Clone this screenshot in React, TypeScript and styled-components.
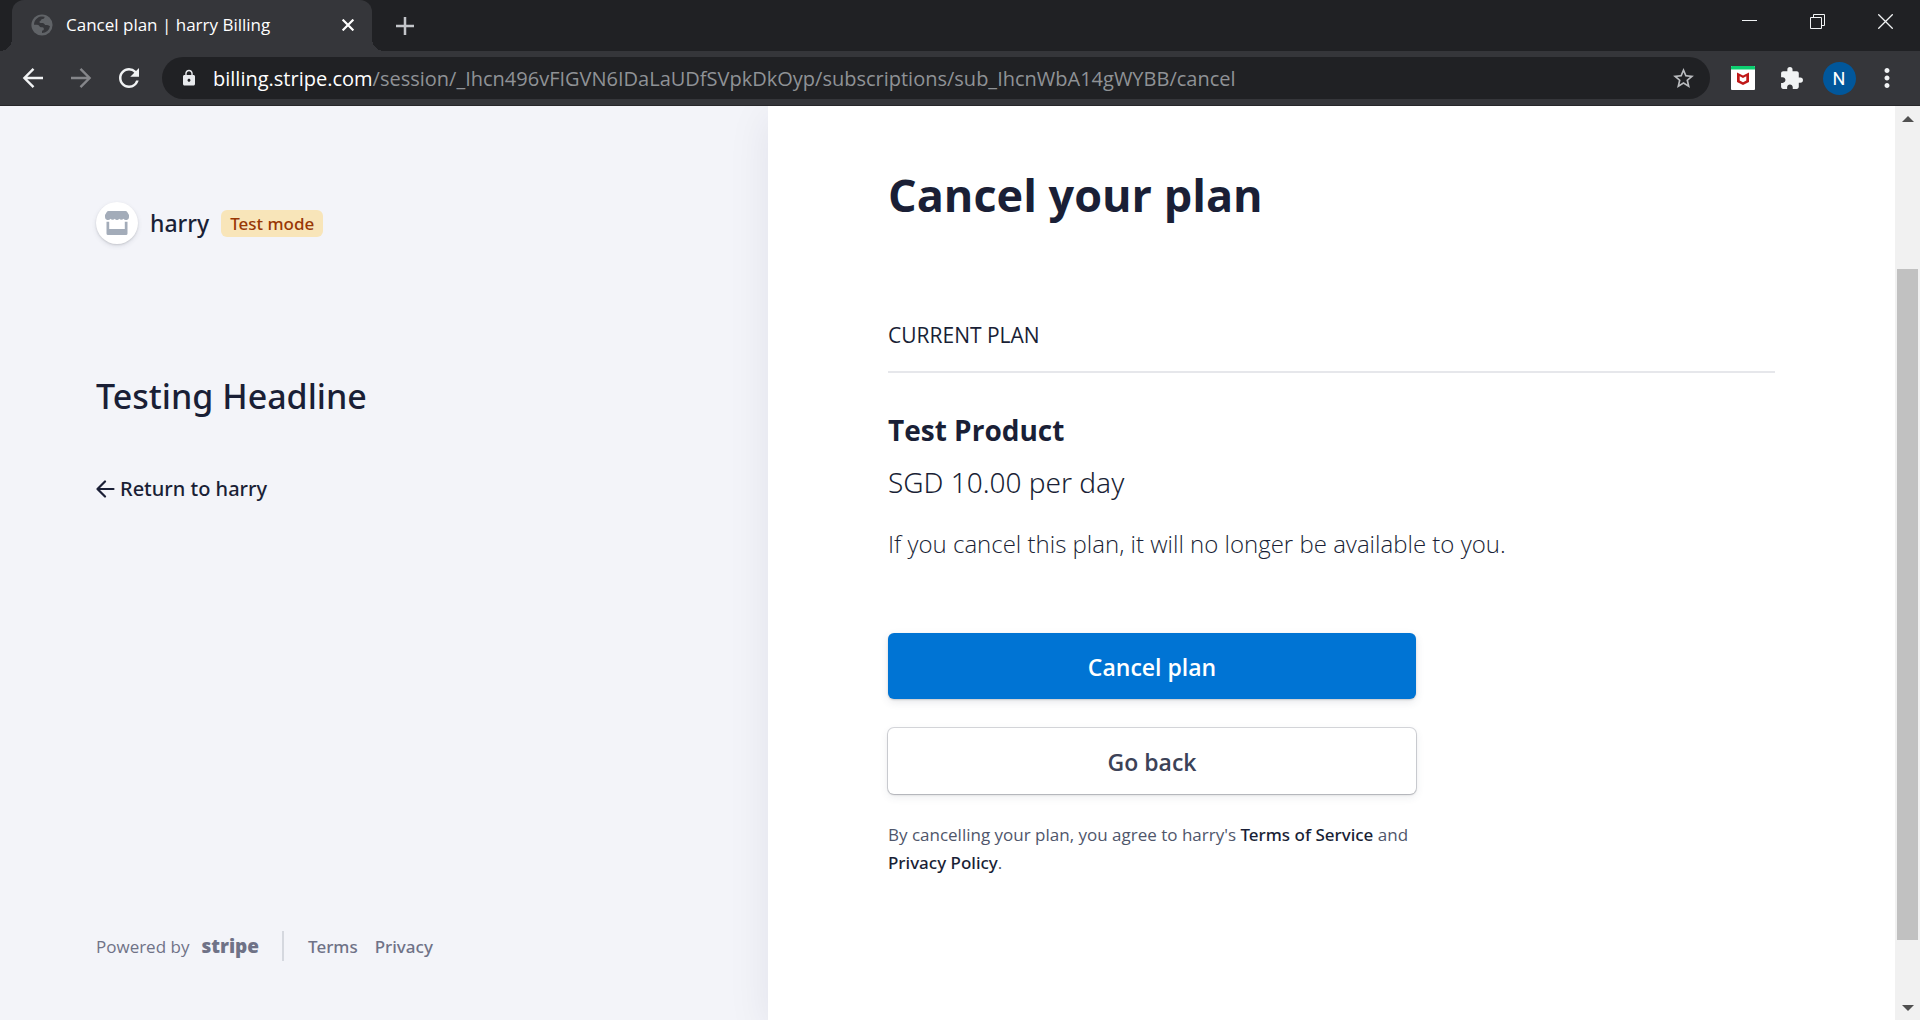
import React from 'react';
import styled, { createGlobalStyle } from 'styled-components';
import { MdRefresh, MdLock, MdStarBorder, MdExtension, MdMoreVert } from 'react-icons/md';

const medium = '"Noto Sans", "Open Sans", sans-serif';

const GlobalStyle = createGlobalStyle`
  *, *::before, *::after { box-sizing: border-box; }
  body {
    margin: 0;
    font-family: "Open Sans", "Noto Sans", sans-serif;
    color: #1a1f36;
  }
  h1, h2, p { margin: 0; }
  button { font: inherit; cursor: pointer; }
  a { color: inherit; text-decoration: none; }
`;

const Window = styled.div`
  display: flex;
  flex-direction: column;
  height: 100vh;
  overflow: hidden;
`;

/* Browser frame */

const TabStrip = styled.header`
  display: flex;
  align-items: stretch;
  flex: none;
  height: 51px;
  padding-left: 12px;
  background: #202124;
`;

const Tab = styled.div`
  position: relative;
  display: flex;
  align-items: center;
  width: 360px;
  padding: 0 12px 2px 19px;
  border-radius: 12px 12px 0 0;
  background: #35363a;
  color: #fff;
  font-size: 17px;

  &::before,
  &::after {
    content: '';
    position: absolute;
    bottom: 0;
    width: 12px;
    height: 12px;
  }
  &::before {
    right: 100%;
    background: radial-gradient(circle at 0 0, transparent 12px, #35363a 12px);
  }
  &::after {
    left: 100%;
    background: radial-gradient(circle at 100% 0, transparent 12px, #35363a 12px);
  }
`;

const TabTitle = styled.span`
  flex: 1;
  margin-left: 13px;
  white-space: nowrap;
`;

const IconButton = styled.button<{ $width?: number; $color?: string }>`
  display: flex;
  align-items: center;
  justify-content: center;
  flex: none;
  width: ${(p) => p.$width ?? 48}px;
  height: 100%;
  padding: 0;
  border: 0;
  background: transparent;
  color: ${(p) => p.$color ?? '#f1f3f4'};
`;

const NewTab = styled(IconButton)`
  margin-left: 9px;
`;

const WindowControls = styled.div`
  display: flex;
  height: 43px;
  margin-left: auto;
`;

const Toolbar = styled.div`
  display: flex;
  align-items: center;
  flex: none;
  height: 55px;
  padding: 0 9px;
  border-bottom: 1px solid #27272a;
  background: #35363a;
`;

const AddressBar = styled.div`
  display: flex;
  align-items: center;
  flex: 1;
  min-width: 0;
  height: 42px;
  margin: 0 9px;
  padding: 0 3px 0 18px;
  border-radius: 21px;
  background: #202124;
  color: #e8eaed;
`;

const Url = styled.div`
  flex: 1;
  min-width: 0;
  margin-left: 15px;
  overflow: hidden;
  white-space: nowrap;
  font-size: 20px;
  color: #8f9296;
`;

const Host = styled.span`
  color: #fff;
`;

const Avatar = styled.span`
  display: flex;
  align-items: center;
  justify-content: center;
  width: 33px;
  height: 33px;
  border-radius: 50%;
  background: #01579b;
  color: #fff;
  font-family: Roboto, sans-serif;
  font-size: 18px;
`;

/* Page */

const Viewport = styled.div`
  display: flex;
  flex: 1;
  min-height: 0;
`;

const Sidebar = styled.aside`
  display: flex;
  flex-direction: column;
  flex: none;
  width: 40%;
  padding: 96px 96px 59px;
  background: #f3f4f9;
`;

const Brand = styled.div`
  display: flex;
  align-items: center;
  gap: 12px;
  font-family: ${medium};
  font-size: 23px;
  font-weight: 500;
`;

const BrandMark = styled.span`
  display: flex;
  align-items: center;
  justify-content: center;
  width: 42px;
  height: 42px;
  border-radius: 50%;
  background: #fff;
  box-shadow: 0 2px 5px rgba(60, 66, 87, 0.12), 0 1px 2px rgba(0, 0, 0, 0.12);
`;

const Badge = styled.span`
  padding: 0 9px;
  border-radius: 6px;
  background: #f8e5b9;
  color: #983705;
  font-size: 17px;
  line-height: 27px;
`;

const Headline = styled.h2`
  margin-top: 130px;
  font-family: ${medium};
  font-size: 34px;
  font-weight: 500;
  line-height: 44px;
`;

const ReturnLink = styled.a`
  display: flex;
  align-items: center;
  align-self: flex-start;
  gap: 5px;
  margin-top: 57px;
  font-family: ${medium};
  font-size: 20px;
  font-weight: 500;
  line-height: 28px;
`;

const Footer = styled.footer`
  display: flex;
  align-items: center;
  height: 30px;
  margin-top: auto;
  font-size: 17px;
  color: #6f7287;
`;

const Powered = styled.a`
  display: flex;
  align-items: center;
  gap: 12px;
  height: 100%;
  padding-right: 23px;
  border-right: 2px solid #d5d8df;
`;

const StripeMark = styled.span`
  font-size: 19px;
  font-weight: 800;
`;

const FooterLinks = styled.nav`
  display: flex;
  gap: 17px;
  padding-left: 24px;
  font-family: ${medium};
  font-weight: 500;
`;

const Main = styled.main`
  position: relative;
  flex: 1;
  min-width: 0;
  padding: 61px 120px 0;
  background: #fff;
  box-shadow: 0 10px 40px rgba(30, 30, 60, 0.08);
  clip-path: inset(0 0 0 -60px);
`;

const Title = styled.h1`
  font-size: 45px;
  line-height: 56px;
`;

const SectionLabel = styled.h2`
  margin-top: 98px;
  padding-bottom: 22px;
  border-bottom: 2px solid #e6e7eb;
  font-size: 21px;
  font-weight: 400;
  line-height: 28px;
`;

const Product = styled.p`
  margin-top: 39px;
  font-size: 28px;
  font-weight: 700;
  line-height: 36px;
`;

const Price = styled.p`
  margin-top: 16px;
  font-family: ${medium};
  font-size: 28px;
  font-weight: 300;
  line-height: 36px;
`;

const Notice = styled.p`
  margin-top: 26px;
  font-size: 24px;
  font-weight: 300;
  line-height: 36px;
`;

const Actions = styled.div`
  display: flex;
  flex-direction: column;
  gap: 29px;
  max-width: 528px;
  margin-top: 71px;
`;

const ActionButton = styled.button<{ $primary?: boolean }>`
  height: 66px;
  padding-top: 3px;
  border: 0;
  border-radius: 6px;
  background: ${(p) => (p.$primary ? '#0074d4' : '#fff')};
  color: ${(p) => (p.$primary ? '#fff' : '#3c4257')};
  box-shadow: ${(p) =>
    p.$primary
      ? '0 1px 2px rgba(0, 0, 0, 0.16), 0 3px 8px rgba(60, 66, 87, 0.12)'
      : '0 0 0 1px rgba(60, 66, 87, 0.2), 0 1px 2px rgba(0, 0, 0, 0.16), 0 3px 8px rgba(60, 66, 87, 0.1)'};
  font-size: 23px;
  font-weight: 600;
`;

const Legal = styled.p`
  max-width: 532px;
  margin-top: 27px;
  font-size: 17px;
  line-height: 28px;
  color: #4f566b;

  a {
    color: #1a1f36;
    font-family: ${medium};
    font-weight: 500;
  }
`;

const ScrollBar = styled.div`
  display: flex;
  flex-direction: column;
  flex: none;
  width: 25px;
  background: #f1f1f1;
`;

const ScrollArrow = styled.span<{ $down?: boolean }>`
  display: flex;
  align-items: center;
  justify-content: center;
  height: 25px;

  &::before {
    content: '';
    border: 6px solid transparent;
    border-top: ${(p) => (p.$down ? '6px solid #505050' : '0')};
    border-bottom: ${(p) => (p.$down ? '0' : '6px solid #505050')};
  }
`;

const ScrollSpace = styled.span<{ $grow: number }>`
  flex: ${(p) => p.$grow};
`;

const ScrollThumb = styled.span`
  flex: 671;
  margin: 0 2px;
  background: #c1c1c1;
`;

const Arrow = ({ flip = false }: { flip?: boolean }) => (
  <svg width="22" height="22" viewBox="0 0 22 22" fill="none" stroke="currentColor" strokeWidth="2.4">
    <path d={flip ? 'M1 11h18M10.5 1.8 19.6 11l-9.1 9.2' : 'M21 11H3M11.5 1.8 2.4 11l9.1 9.2'} />
  </svg>
);

const Globe = () => (
  <svg width="22" height="22" viewBox="0 0 22 22">
    <circle cx="11" cy="11" r="10.6" fill="#606367" />
    <path
      fill="#35363a"
      d="M13.500 2.800c.2 1.600-.9 2-2.200 2.200-1.400.2-1 1.500-2.100 2-1.200.5-1.100 1.900.2 2 1.500.1 3.600-.2 4.200 1.200.5 1.300 2.300.6 3.400 1 1.200.5 1.600.9 2 .7a8 8 0 0 1-8 7.100v-2.300c1.300-.2 2-.9 1.800-2.200-.2-1.200-1.500-1.300-2.700-1.200-1.700.1-1.500-1.800-3-2.300-1.300-.4-2.800-.4-4.100-.2A8.200 8.200 0 0 1 13.500 2.800z"
    />
  </svg>
);

const StoreIcon = () => (
  <svg width="24" height="24" viewBox="0 0 24 24" fill="#a3acb9">
    <path d="M3.500 0h17a2 2 0 0 1 1.700 1L24 4v2a3 3 0 0 1-5.500 1.700 2.600 2.600 0 0 1-4.300 0 2.600 2.600 0 0 1-4.400 0 2.600 2.600 0 0 1-4.300 0A3 3 0 0 1 0 6V4l1.800-3a2 2 0 0 1 1.700-1z" />
    <path d="M1.500 10.800h2.700V18h15.600v-7.200h2.700V22.500A1.500 1.500 0 0 1 21 24H3a1.500 1.500 0 0 1-1.500-1.500z" />
  </svg>
);

const ShieldBadge = () => (
  <svg width="24" height="24" viewBox="0 0 24 24">
    <rect width="24" height="24" rx="1" fill="#fff" />
    <path d="M0 3.500V1a1 1 0 0 1 1-1h22a1 1 0 0 1 1 1v2.500z" fill="#0ccf70" />
    <path d="M6 6.500 12 9.500 18 6.500V16L12 19 6 16zM8.700 10.300v4.200l3.300 1.700 3.300-1.700v-4.200L12 12z" fill="#c01818" fillRule="evenodd" />
  </svg>
);

export default function App() {
  return (
    <Window>
      <GlobalStyle />
      <TabStrip>
        <Tab>
          <Globe />
          <TabTitle>Cancel plan | harry Billing</TabTitle>
          <IconButton $width={24} $color="#fff" aria-label="Close tab">
            <svg width="12" height="12" viewBox="0 0 12 12" stroke="currentColor" strokeWidth="2.2">
              <path d="M.6.6l10.800 10.800M11.400.6.6 11.400" />
            </svg>
          </IconButton>
        </Tab>
        <NewTab $color="#c3c5c9" aria-label="New tab">
          <svg width="18" height="18" viewBox="0 0 18 18" stroke="currentColor" strokeWidth="2.500">
            <path d="M9 0v18M0 9h18" />
          </svg>
        </NewTab>
        <WindowControls>
          <IconButton $width={68} aria-label="Minimise">
            <svg width="15" height="15" viewBox="0 0 15 15" fill="none" stroke="currentColor">
              <path d="M0 6.500h15" />
            </svg>
          </IconButton>
          <IconButton $width={68} aria-label="Restore">
            <svg width="15" height="15" viewBox="0 0 15 15" fill="none" stroke="currentColor">
              <path d="M.5 3.500h11v11H.5zM3.500 3.500v-3h11v11h-3" />
            </svg>
          </IconButton>
          <IconButton $width={69} aria-label="Close">
            <svg width="15" height="15" viewBox="0 0 15 15" fill="none" stroke="currentColor" strokeWidth="1.300">
              <path d="M.3.3l14.400 14.400M14.700.3.3 14.700" />
            </svg>
          </IconButton>
        </WindowControls>
      </TabStrip>

      <Toolbar>
        <IconButton aria-label="Back"><Arrow /></IconButton>
        <IconButton $color="#85868a" aria-label="Forward"><Arrow flip /></IconButton>
        <IconButton aria-label="Reload"><MdRefresh size={30} /></IconButton>
        <AddressBar>
          <MdLock size={18} />
          <Url>
            <Host>billing.stripe.com</Host>
            /session/_Ihcn496vFIGVN6IDaLaUDfSVpkDkOyp/subscriptions/sub_IhcnWbA14gWYBB/cancel
          </Url>
          <IconButton $color="#b9bbbe" aria-label="Bookmark this page"><MdStarBorder size={25} /></IconButton>
        </AddressBar>
        <IconButton aria-label="Site safety"><ShieldBadge /></IconButton>
        <IconButton aria-label="Extensions"><MdExtension size={25} /></IconButton>
        <IconButton aria-label="Profile"><Avatar>N</Avatar></IconButton>
        <IconButton aria-label="Menu"><MdMoreVert size={30} /></IconButton>
      </Toolbar>

      <Viewport>
        <Sidebar>
          <Brand>
            <BrandMark><StoreIcon /></BrandMark>
            <span>harry</span>
            <Badge>Test mode</Badge>
          </Brand>
          <Headline>Testing Headline</Headline>
          <ReturnLink href="#return">
            <svg width="19" height="18" viewBox="0 0 19 18" fill="none" stroke="currentColor" strokeWidth="2.200" strokeLinecap="round" strokeLinejoin="round">
              <path d="M17.500 9H1.500M9 1.500 1.500 9 9 16.500" />
            </svg>
            Return to harry
          </ReturnLink>
          <Footer>
            <Powered href="#stripe">
              <span>Powered by</span>
              <StripeMark>stripe</StripeMark>
            </Powered>
            <FooterLinks>
              <a href="#terms">Terms</a>
              <a href="#privacy">Privacy</a>
            </FooterLinks>
          </Footer>
        </Sidebar>

        <Main>
          <Title>Cancel your plan</Title>
          <SectionLabel>CURRENT PLAN</SectionLabel>
          <Product>Test Product</Product>
          <Price>SGD 10.00 per day</Price>
          <Notice>If you cancel this plan, it will no longer be available to you.</Notice>
          <Actions>
            <ActionButton type="button" $primary>Cancel plan</ActionButton>
            <ActionButton type="button">Go back</ActionButton>
          </Actions>
          <Legal>
            By cancelling your plan, you agree to harry's <a href="#tos">Terms of Service</a> and{' '}
            <a href="#policy">Privacy Policy</a>.
          </Legal>
        </Main>

        <ScrollBar aria-hidden="true">
          <ScrollArrow />
          <ScrollSpace $grow={138} />
          <ScrollThumb />
          <ScrollSpace $grow={55} />
          <ScrollArrow $down />
        </ScrollBar>
      </Viewport>
    </Window>
  );
}
